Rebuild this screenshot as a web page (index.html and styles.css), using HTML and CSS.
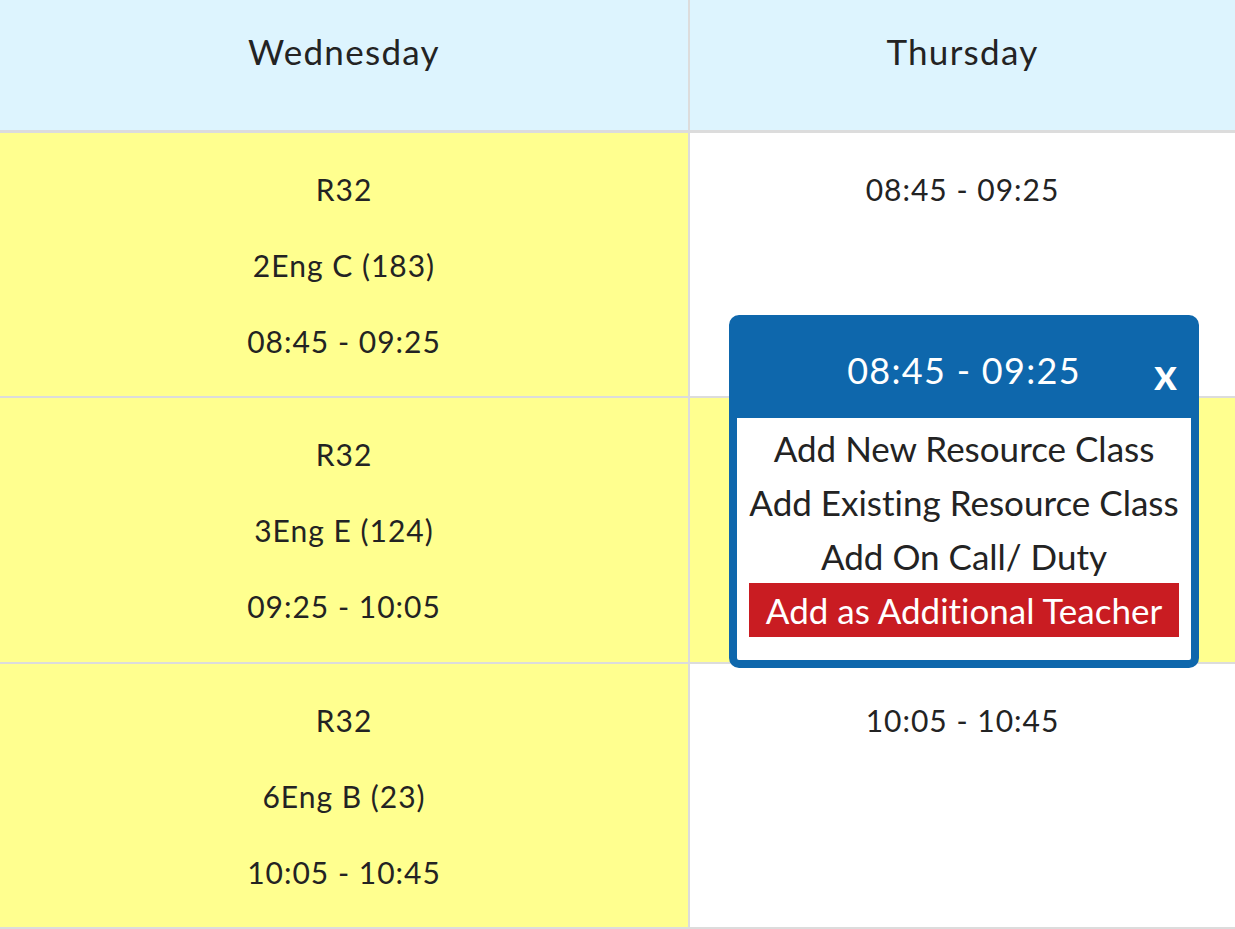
FILE: index.html
```html
<!DOCTYPE html>
<html lang="en">
<head>
    <meta charset="UTF-8">
    <title>Timetable</title>
    <link rel="stylesheet" href="styles.css">
</head>
<body>
    <div class="timetable">
        <div class="day-col left">
            <div class="day-head">Wednesday</div>
            <div class="slot busy">
                <p>R32</p>
                <p>2Eng C (183)</p>
                <p>08:45 - 09:25</p>
            </div>
            <div class="slot busy">
                <p>R32</p>
                <p>3Eng E (124)</p>
                <p>09:25 - 10:05</p>
            </div>
            <div class="slot busy">
                <p>R32</p>
                <p>6Eng B (23)</p>
                <p>10:05 - 10:45</p>
            </div>
        </div>
        <div class="day-col">
            <div class="day-head">Thursday</div>
            <div class="slot">
                <p>08:45 - 09:25</p>
            </div>
            <div class="slot busy"></div>
            <div class="slot">
                <p>10:05 - 10:45</p>
            </div>
        </div>

        <div class="popup">
            <div class="popup-head">
                <span class="popup-title">08:45 - 09:25</span>
                <span class="popup-close">x</span>
            </div>
            <div class="popup-menu">
                <div class="menu-item">Add New Resource Class</div>
                <div class="menu-item">Add Existing Resource Class</div>
                <div class="menu-item">Add On Call/ Duty</div>
                <div class="menu-item danger">Add as Additional Teacher</div>
            </div>
        </div>
    </div>
</body>
</html>
```

FILE: styles.css
```css
body {
    margin: 0;
    font-family: Lato, "Liberation Sans", sans-serif;
    font-variant-ligatures: none;
    color: #232323;
    background: #fff;
    overflow: hidden;
}
.timetable {
    position: relative;
    display: flex;
    width: 1235px;
    height: 929px;
    overflow: hidden;
}
.day-col {
    flex: 1;
    display: flex;
    flex-direction: column;
}
.day-col.left {
    flex: 0 0 688px;
    border-right: 2px solid #dcdcdc;
}
.day-head {
    height: 99px;
    padding-top: 31px;
    line-height: 40px;
    font-size: 35px;
    letter-spacing: 1.3px;
    text-align: center;
    background-color: #ddf4fe;
    border-bottom: 3px solid #dcdcdc;
}
.slot {
    height: 194px;
    padding: 36px 0 34px;
    border-bottom: 2px solid #dcdcdc;
    display: flex;
    flex-direction: column;
    gap: 36px;
    text-align: center;
    font-size: 30px;
    letter-spacing: 1px;
    line-height: 40px;
}
.slot.busy {
    background-color: #ffff8f;
}
.slot p {
    margin: 0;
}
.popup {
    position: absolute;
    left: 729px;
    top: 315px;
    width: 454px;
    border: 8px solid #0e67ac;
    border-radius: 10px;
    background: #fff;
}
.popup-head {
    position: relative;
    height: 95px;
    background-color: #0e67ac;
    color: #fff;
    text-align: center;
    line-height: 95px;
}
.popup-title {
    font-size: 36px;
    letter-spacing: 1.3px;
}
.popup-close {
    position: absolute;
    right: 14px;
    top: 28px;
    font-size: 44px;
    line-height: 1;
    font-weight: bold;
}
.popup-menu {
    padding: 3px 12px 23px;
    text-align: center;
    font-size: 35px;
}
.menu-item {
    line-height: 54px;
}
.menu-item.danger {
    background-color: #c91c22;
    color: #fff;
}
```
